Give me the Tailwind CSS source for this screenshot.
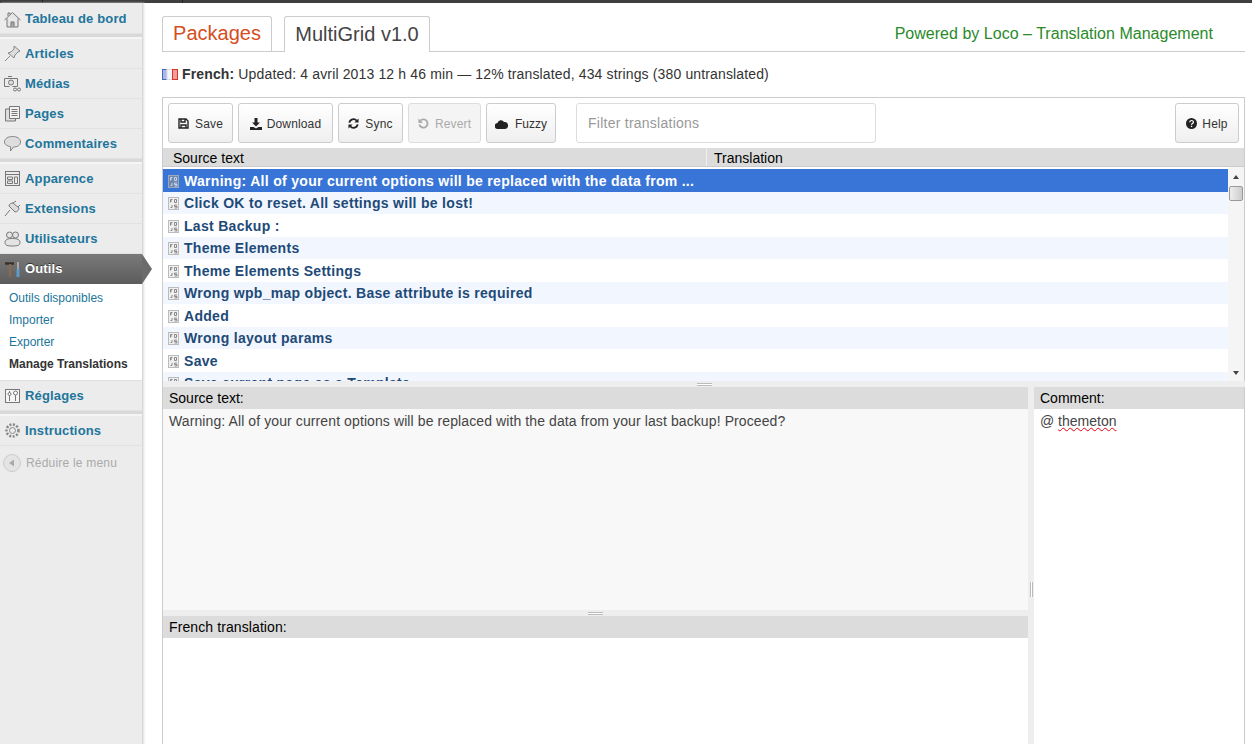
<!DOCTYPE html>
<html>
<head>
<meta charset="utf-8">
<script src="https://cdn.jsdelivr.net/npm/@tailwindcss/browser@4"></script>
</head>
<body class="m-0 bg-white overflow-hidden font-['Liberation_Sans',Arial,sans-serif]">
<div class="w-[1252px] h-[744px] overflow-hidden flex flex-col">
  <div class="h-[3px] bg-[#3f3f3f] shrink-0 flex">
    <div class="w-[43px] border-r border-[#222]"></div>
    <div class="w-[140px] border-r border-[#222]"></div>
  </div>
  <div class="flex flex-1 min-h-0">
    <!-- sidebar -->
    <aside class="w-[143px] shrink-0 bg-[#ececec] border-r border-[#d8d8d8] shadow-[1px_0_2px_#ddd] text-[13px] font-bold text-[#21759b] tracking-[0.15px] flex flex-col">
      <a class="h-[31px] pt-[2px] flex items-center gap-[4px] pl-[4px] border-b border-[#e2e2e2]">
        <svg class="w-[17px] h-[17px]" viewBox="0 0 17 17" fill="#e4e4e4" stroke="#777"><path d="M.5 9 8.500 1.500l8 7.500M3 7.500v8.500h11V7.500"/><path d="M7 16v-5h3v5" fill="#aaa"/><path d="M4 5V2h2v1.500"/></svg>Tableau de bord</a>
      <div class="h-[5px] bg-[#d9d9d9] border-b-2 border-[#f5f5f5]"></div>
      <a class="h-[30px] flex items-center gap-[4px] pl-[4px] border-b border-[#e2e2e2]">
        <svg class="w-[17px] h-[17px]" viewBox="0 0 17 17" fill="#ddd" stroke="#888"><path d="m10 1 6 5-2 1-3 3-1 3-6-5 3-1 3-3zM6 11l-5 5"/></svg>Articles</a>
      <a class="h-[30px] flex items-center gap-[4px] pl-[4px] border-b border-[#e2e2e2]">
        <svg class="w-[17px] h-[17px]" viewBox="0 0 17 17" fill="none" stroke="#777"><path d="M.5 3.500h13v8h-5M.5 3.500v8h5M4 1.500h4"/><circle cx="7" cy="7.500" r="2.500" fill="#ddd"/><circle cx="11" cy="14.500" r="1.500"/><circle cx="15" cy="14.500" r="1.500"/></svg>Médias</a>
      <a class="h-[30px] flex items-center gap-[4px] pl-[4px] border-b border-[#e2e2e2]">
        <svg class="w-[17px] h-[17px]" viewBox="0 0 17 17" fill="#ddd" stroke="#777"><path d="M1.500 4v12h10V4z"/><path d="M5.500 1.500h10v12h-10z" fill="#f2f2f2"/><path d="M7.500 4.500h6M7.500 6.500h6M7.500 8.500h6M7.500 10.500h6"/></svg>Pages</a>
      <a class="h-[30px] flex items-center gap-[4px] pl-[4px] border-b border-[#e2e2e2]">
        <svg class="w-[17px] h-[17px]" viewBox="0 0 17 17" fill="#ddd" stroke="#888"><path d="M8.500 1.500c4.500 0 8 2 8 5.500s-3.500 5-7 5l-3 4v-4.300C3 11 .5 9.500.5 7c0-3.500 3.500-5.500 8-5.500z"/></svg>Commentaires</a>
      <div class="h-[5px] bg-[#d9d9d9] border-b-2 border-[#f5f5f5]"></div>
      <a class="h-[30px] flex items-center gap-[4px] pl-[4px] border-b border-[#e2e2e2]">
        <svg class="w-[17px] h-[17px]" viewBox="0 0 17 17" fill="none" stroke="#777"><rect x="1.500" y="1.500" width="14" height="14"/><path d="M1.500 4.500h14M3.500 7h5v2.500h-5zM3.500 11h5v2.500h-5zM10.500 7h3v6.500h-3z"/></svg>Apparence</a>
      <a class="h-[30px] flex items-center gap-[4px] pl-[4px] border-b border-[#e2e2e2]">
        <svg class="w-[17px] h-[17px]" viewBox="0 0 17 17" fill="#ddd" stroke="#777"><path d="m5 6 6 6c2 0 4-2 4-4L9 3C7 3 5 4 5 6zM9 3l3-2M14 7l2-2M6 10l-5 6"/></svg>Extensions</a>
      <a class="h-[30px] flex items-center gap-[4px] pl-[4px] border-b border-[#e2e2e2]">
        <svg class="w-[17px] h-[17px]" viewBox="0 0 17 17" fill="#e4e4e4" stroke="#777"><circle cx="5.500" cy="5" r="3"/><circle cx="11.500" cy="5" r="3"/><path d="M1 12.500C1 9.500 4 8.500 8.500 8.500s7.500 1 7.500 4-3 3.500-7.500 3.500S1 15.500 1 12.500z"/></svg>Utilisateurs</a>
      <a class="relative h-[30px] flex items-center gap-[4px] pl-[4px] text-white bg-gradient-to-b from-[#7a7a7a] to-[#5c5c5c] [text-shadow:0_-1px_0_#333]">
        <svg class="w-[17px] h-[17px]" viewBox="0 0 17 17" fill="none"><path d="M1 2.500h9" stroke="#3a3028" stroke-width="2.500"/><path d="M6 3v13" stroke="#8a6a4a" stroke-width="2"/><path d="M14 1v7" stroke="#bbb" stroke-width="1.500"/><path d="M14 8v8" stroke="#5f9cc8" stroke-width="3"/></svg>Outils
        <span class="absolute left-[142px] top-[0px] w-0 h-0 border-y-[15px] border-y-transparent border-l-[10px] border-l-[#6b6b6b]"></span>
      </a>
      <div class="h-[97px] bg-white border-b border-[#dfdfdf] pt-[3px] text-[12px] font-normal tracking-normal flex flex-col">
        <a class="h-[22px] flex items-center pl-[9px]">Outils disponibles</a>
        <a class="h-[22px] flex items-center pl-[9px]">Importer</a>
        <a class="h-[22px] flex items-center pl-[9px]">Exporter</a>
        <a class="h-[22px] flex items-center pl-[9px] font-bold text-[#333]">Manage Translations</a>
      </div>
      <a class="h-[30px] flex items-center gap-[4px] pl-[4px] border-b border-[#e2e2e2]">
        <svg class="w-[17px] h-[17px]" viewBox="0 0 17 17" fill="none" stroke="#777"><rect x="1.500" y="2.500" width="14" height="13" fill="#f5f5f5"/><path d="M5.500 4v10M11.500 8v6"/><circle cx="5.500" cy="7" r="1.500" fill="#fff"/><circle cx="11.500" cy="6" r="2" fill="#fff"/></svg>Réglages</a>
      <div class="h-[5px] bg-[#d9d9d9] border-b-2 border-[#f5f5f5]"></div>
      <a class="h-[30px] flex items-center gap-[4px] pl-[4px] border-b border-[#e2e2e2]">
        <svg class="w-[17px] h-[17px]" viewBox="0 0 17 17" fill="none" stroke="#888"><circle cx="8.500" cy="8.500" r="3"/><circle cx="8.500" cy="8.500" r="6" stroke-width="2.500" stroke-dasharray="2 1.500"/></svg>Instructions</a>
      <div class="h-[34px] flex items-center gap-[5px] pl-[3px] text-[12px] font-normal text-[#aaa] tracking-[0.2px]">
        <svg class="w-[18px] h-[18px]" viewBox="0 0 18 18"><circle cx="9" cy="9" r="8.500" fill="#e4e4e4" stroke="#ccc"/><path d="M11 5.500v7L6 9z" fill="#aaa"/></svg>Réduire le menu</div>
    </aside>
    <!-- main -->
    <main class="flex-1 min-w-0 pl-[19px] pr-[7px] flex flex-col text-[#333]">
      <div class="h-[49px] pt-[13px] flex items-end border-b border-[#ccc] text-[20px] relative">
        <a class="h-[35px] w-[110px] pb-[2px] flex items-center justify-center border border-[#ccc] border-b-0 rounded-t-[3px] text-[#d54e21] mr-[12px] bg-white">Packages</a>
        <a class="h-[36px] w-[146px] -mb-px pb-[2px] flex items-center justify-center border border-[#ccc] border-b-0 rounded-t-[3px] text-[#444] bg-white">MultiGrid v1.0</a>
        <span class="ml-auto mr-[32px] self-center pt-[1px] text-[16px] tracking-[0.02px] text-[#2a8a2a]">Powered by Loco – Translation Management</span>
      </div>
      <div class="h-[45px] flex items-center gap-[4px] text-[14px] tracking-[0.14px] pb-[1px]">
        <svg class="w-[16px] h-[11px]" viewBox="0 0 16 11"><rect x=".5" y=".5" width="5" height="10" fill="#a8baea" stroke="#4a68b8"/><rect x="5" y=".5" width="6" height="10" fill="#f4f4fa" stroke="#ddd"/><rect x="10.500" y=".5" width="5" height="10" fill="#f0a098" stroke="#d8352a"/></svg>
        <span><b>French:</b> Updated: 4 avril 2013 12 h 46 min — 12% translated, 434 strings (380 untranslated)</span>
      </div>
      <section class="flex-1 min-h-0 border-t border-l border-r border-[#ccc] flex flex-col w-[1083px]">
        <div class="h-[50px] shrink-0 flex items-center pl-[5px] pr-[5px] text-[12px] tracking-[0.15px] text-[#333]">
          <button class="w-[65px] h-[40px] pt-[1px] flex items-center justify-center gap-[6px] border border-[#ccc] rounded-[3px] bg-gradient-to-b from-white to-[#efefef]"><svg class="w-[11px] h-[11px]" viewBox="0 0 11 11" fill="none" stroke="#222" stroke-width="1.400"><path d="M1 1h7l2 2v7H1zM3 1v3h4V1M3 10V7h5v3"/></svg>Save</button>
          <button class="ml-[5px] w-[95px] h-[40px] pt-[1px] flex items-center justify-center gap-[5px] border border-[#ccc] rounded-[3px] bg-gradient-to-b from-white to-[#efefef]"><svg class="w-[12px] h-[12px]" viewBox="0 0 12 12" fill="#222"><path d="M4.500 0h3v4.500H10L6 8.500 2 4.500h2.500zM0 9h3.500L6 10.500 8.500 9H12v3H0z"/></svg>Download</button>
          <button class="ml-[5px] w-[65px] h-[40px] pt-[1px] flex items-center justify-center gap-[6px] border border-[#ccc] rounded-[3px] bg-gradient-to-b from-white to-[#efefef]"><svg class="w-[11px] h-[11px]" viewBox="0 0 12 12" fill="none" stroke="#222" stroke-width="2"><path d="M1.500 5a4.500 4.500 0 0 1 8-2M10.500 7a4.500 4.500 0 0 1-8 2"/><path d="M11.500 0.500v4.500H7zM.5 11.500V7H5z" stroke="none" fill="#222"/></svg>Sync</button>
          <button class="ml-[5px] w-[73px] h-[40px] pt-[1px] flex items-center justify-center gap-[6px] border border-[#ddd] rounded-[3px] bg-[#f4f4f4] text-[#aaa]"><svg class="w-[11px] h-[11px]" viewBox="0 0 12 12" fill="none" stroke="#aaa" stroke-width="2"><path d="M2.500 3a4.500 4.500 0 1 1-1 4"/><path d="M.5 .5v5h5z" stroke="none" fill="#aaa"/></svg>Revert</button>
          <button class="ml-[5px] w-[70px] h-[40px] pt-[1px] flex items-center justify-center gap-[7px] border border-[#ccc] rounded-[3px] bg-gradient-to-b from-white to-[#efefef] tracking-normal"><svg class="w-[13px] h-[10px]" viewBox="0 0 13 10" fill="#222"><path d="M3 10a3 3 0 0 1-.5-6A3.500 3.500 0 0 1 9 3a3.500 3.500 0 0 1 1 7z"/></svg>Fuzzy</button>
          <div class="ml-[20px] w-[300px] h-[40px] flex items-center pl-[11px] border border-[#ddd] rounded-[3px] bg-white text-[14px] tracking-[0.25px] text-[#999]">Filter translations</div>
          <button class="ml-auto w-[64px] h-[40px] pt-[1px] flex items-center justify-center gap-[5px] border border-[#ccc] rounded-[3px] bg-gradient-to-b from-white to-[#efefef]"><svg class="w-[11px] h-[11px]" viewBox="0 0 11 11"><circle cx="5.500" cy="5.500" r="5.500" fill="#222"/><path d="M3.800 4.200c0-2.300 3.600-2.300 3.600 0 0 1.300-1.900 1.300-1.900 2.500" stroke="#fff" stroke-width="1.200" fill="none"/><rect x="4.900" y="7.700" width="1.300" height="1.300" fill="#fff"/></svg>Help</button>
        </div>
        <div class="h-[19px] shrink-0 flex bg-[#dcdcdc] text-[14px] text-black leading-[20px] border-b border-[#ccc]">
          <div class="w-[544px] pl-[10px] border-r border-[#f0f0f0]">Source text</div>
          <div class="pl-[7px]">Translation</div>
        </div>
        <div class="h-[214px] shrink-0 flex overflow-hidden">
          <div class="flex-1 pt-[2.4px] text-[14px] font-bold text-[#1e4a78] tracking-[0.3px] overflow-hidden">
            <div class="h-[22.5px] pt-[1px] flex items-center gap-[5px] pl-[5px] bg-[#3875d7] text-white"><svg class="w-[11px] h-[13px]" viewBox="0 0 11 13"><rect x=".5" y=".5" width="10" height="12" fill="#6d87ad" stroke="#9ab"/><path d="M2.500 5.500v-3h2M2.500 4h1.500M6.500 2.500h2v3h-2zM4 8v2.500H2.500M9 8H6.500v1.500H9v1.500H6.500" stroke="#c8d4e8" fill="none"/></svg>Warning: All of your current options will be replaced with the data from ...</div>
            <div class="h-[22.5px] pt-[1px] flex items-center gap-[5px] pl-[5px] bg-[#f2f6fe]"><svg class="w-[11px] h-[13px]" viewBox="0 0 11 13"><rect x=".5" y=".5" width="10" height="12" fill="#f0f0f0" stroke="#bbb"/><path d="M2.500 5.500v-3h2M2.500 4h1.500M6.500 2.500h2v3h-2zM4 8v2.500H2.500M9 8H6.500v1.500H9v1.500H6.500" stroke="#888" fill="none"/></svg>Click OK to reset. All settings will be lost!</div>
            <div class="h-[22.5px] pt-[1px] flex items-center gap-[5px] pl-[5px] bg-white"><svg class="w-[11px] h-[13px]" viewBox="0 0 11 13"><rect x=".5" y=".5" width="10" height="12" fill="#f0f0f0" stroke="#bbb"/><path d="M2.500 5.500v-3h2M2.500 4h1.500M6.500 2.500h2v3h-2zM4 8v2.500H2.500M9 8H6.500v1.500H9v1.500H6.500" stroke="#888" fill="none"/></svg>Last Backup :</div>
            <div class="h-[22.5px] pt-[1px] flex items-center gap-[5px] pl-[5px] bg-[#f2f6fe]"><svg class="w-[11px] h-[13px]" viewBox="0 0 11 13"><rect x=".5" y=".5" width="10" height="12" fill="#f0f0f0" stroke="#bbb"/><path d="M2.500 5.500v-3h2M2.500 4h1.500M6.500 2.500h2v3h-2zM4 8v2.500H2.500M9 8H6.500v1.500H9v1.500H6.500" stroke="#888" fill="none"/></svg>Theme Elements</div>
            <div class="h-[22.5px] pt-[1px] flex items-center gap-[5px] pl-[5px] bg-white"><svg class="w-[11px] h-[13px]" viewBox="0 0 11 13"><rect x=".5" y=".5" width="10" height="12" fill="#f0f0f0" stroke="#bbb"/><path d="M2.500 5.500v-3h2M2.500 4h1.500M6.500 2.500h2v3h-2zM4 8v2.500H2.500M9 8H6.500v1.500H9v1.500H6.500" stroke="#888" fill="none"/></svg>Theme Elements Settings</div>
            <div class="h-[22.5px] pt-[1px] flex items-center gap-[5px] pl-[5px] bg-[#f2f6fe]"><svg class="w-[11px] h-[13px]" viewBox="0 0 11 13"><rect x=".5" y=".5" width="10" height="12" fill="#f0f0f0" stroke="#bbb"/><path d="M2.500 5.500v-3h2M2.500 4h1.500M6.500 2.500h2v3h-2zM4 8v2.500H2.500M9 8H6.500v1.500H9v1.500H6.500" stroke="#888" fill="none"/></svg>Wrong wpb_map object. Base attribute is required</div>
            <div class="h-[22.5px] pt-[1px] flex items-center gap-[5px] pl-[5px] bg-white"><svg class="w-[11px] h-[13px]" viewBox="0 0 11 13"><rect x=".5" y=".5" width="10" height="12" fill="#f0f0f0" stroke="#bbb"/><path d="M2.500 5.500v-3h2M2.500 4h1.500M6.500 2.500h2v3h-2zM4 8v2.500H2.500M9 8H6.500v1.500H9v1.500H6.500" stroke="#888" fill="none"/></svg>Added</div>
            <div class="h-[22.5px] pt-[1px] flex items-center gap-[5px] pl-[5px] bg-[#f2f6fe]"><svg class="w-[11px] h-[13px]" viewBox="0 0 11 13"><rect x=".5" y=".5" width="10" height="12" fill="#f0f0f0" stroke="#bbb"/><path d="M2.500 5.500v-3h2M2.500 4h1.500M6.500 2.500h2v3h-2zM4 8v2.500H2.500M9 8H6.500v1.500H9v1.500H6.500" stroke="#888" fill="none"/></svg>Wrong layout params</div>
            <div class="h-[22.5px] pt-[1px] flex items-center gap-[5px] pl-[5px] bg-white"><svg class="w-[11px] h-[13px]" viewBox="0 0 11 13"><rect x=".5" y=".5" width="10" height="12" fill="#f0f0f0" stroke="#bbb"/><path d="M2.500 5.500v-3h2M2.500 4h1.500M6.500 2.500h2v3h-2zM4 8v2.500H2.500M9 8H6.500v1.500H9v1.500H6.500" stroke="#888" fill="none"/></svg>Save</div>
            <div class="h-[22.5px] pt-[1px] flex items-center gap-[5px] pl-[5px] bg-[#f2f6fe]"><svg class="w-[11px] h-[13px]" viewBox="0 0 11 13"><rect x=".5" y=".5" width="10" height="12" fill="#f0f0f0" stroke="#bbb"/><path d="M2.500 5.500v-3h2M2.500 4h1.500M6.500 2.500h2v3h-2zM4 8v2.500H2.500M9 8H6.500v1.500H9v1.500H6.500" stroke="#888" fill="none"/></svg>Save current page as a Template</div>
          </div>
          <div class="w-[16px] shrink-0 bg-[#f5f5f5] flex flex-col items-center">
            <div class="h-[19px] flex items-center"><div class="w-0 h-0 border-x-[3.5px] border-x-transparent border-b-[4px] border-b-[#444]"></div></div>
            <div class="w-[14px] h-[15px] bg-gradient-to-r from-[#eee] to-[#ccc] border border-[#999] rounded-[2px]"></div>
            <div class="mt-auto h-[17px] flex items-center"><div class="w-0 h-0 border-x-[3.5px] border-x-transparent border-t-[4px] border-t-[#444]"></div></div>
          </div>
        </div>
        <div class="h-[6px] shrink-0 bg-[#eee] flex flex-col items-center justify-center w-[1082px]"><div class="w-[15px] h-[3px] border-y border-[#bbb] bg-white"></div></div>
        <div class="flex-1 min-h-0 flex text-[14px] tracking-[0.1px]">
          <div class="w-[865px] shrink-0 flex flex-col">
            <div class="h-[22px] bg-[#dcdcdc] text-black pl-[6px] flex items-center tracking-normal">Source text:</div>
            <div class="h-[201px] bg-[#f8f8f8] pl-[6px] pt-[2px] text-[#444]">Warning: All of your current options will be replaced with the data from your last backup! Proceed?</div>
            <div class="h-[6px] bg-[#eee] flex items-center justify-center"><div class="w-[15px] h-[3px] border-y border-[#bbb] bg-white"></div></div>
            <div class="h-[22px] bg-[#dcdcdc] text-black pl-[6px] flex items-center">French translation:</div>
            <div class="flex-1 bg-white"></div>
          </div>
          <div class="w-[6px] shrink-0 bg-[#eee] flex items-center"><div class="mt-[48px] w-[3px] h-[15px] mx-auto border-x border-[#bbb] bg-white"></div></div>
          <div class="flex-1 flex flex-col tracking-normal">
            <div class="h-[22px] bg-[#dcdcdc] text-black pl-[6px] flex items-center">Comment:</div>
            <div class="pl-[6px] pt-[2px] text-[#444]">@ <span class="underline decoration-wavy decoration-red-600 decoration-1">themeton</span></div>
          </div>
        </div>
      </section>
    </main>
  </div>
</div>
</body>
</html>
